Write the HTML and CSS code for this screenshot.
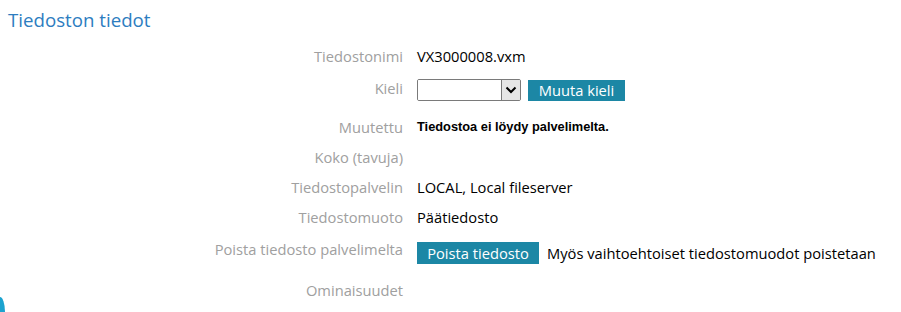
FILE: index.html
```html
<!DOCTYPE html>
<html lang="fi">
<head>
<meta charset="utf-8">
<title>Tiedoston tiedot</title>
<link rel="stylesheet" href="styles.css">
</head>
<body>
<h1 class="title">Tiedoston tiedot</h1>
<div class="details">
  <div class="row">
    <div class="label">Tiedostonimi</div>
    <div class="value">VX3000008.vxm</div>
  </div>
  <div class="row row-ctl">
    <div class="label">Kieli</div>
    <div class="value ctl">
      <div class="select"><span class="select-box"></span><span class="select-arrow"><svg width="12" height="8" viewBox="0 0 12 8"><path d="M1.5 1.5 L6 6 L10.5 1.5" fill="none" stroke="#000" stroke-width="2"/></svg></span></div>
      <button class="btn btn-lang">Muuta kieli</button>
    </div>
  </div>
  <div class="row">
    <div class="label">Muutettu</div>
    <div class="value strong">Tiedostoa ei löydy palvelimelta.</div>
  </div>
  <div class="row">
    <div class="label">Koko (tavuja)</div>
    <div class="value"></div>
  </div>
  <div class="row">
    <div class="label">Tiedostopalvelin</div>
    <div class="value">LOCAL, Local fileserver</div>
  </div>
  <div class="row">
    <div class="label">Tiedostomuoto</div>
    <div class="value">Päätiedosto</div>
  </div>
  <div class="row row-del">
    <div class="label">Poista tiedosto palvelimelta</div>
    <div class="value ctl">
      <button class="btn btn-del">Poista tiedosto</button>
      <span class="note">Myös vaihtoehtoiset tiedostomuodot poistetaan</span>
    </div>
  </div>
  <div class="row">
    <div class="label">Ominaisuudet</div>
    <div class="value"></div>
  </div>
</div>
<div class="fab"></div>
</body>
</html>
```
FILE: styles.css
```css
html, body {
  margin: 0;
  padding: 0;
  background: #fff;
  overflow: hidden;
}
body {
  padding: 8px;
  font-family: "Open Sans", "Noto Sans", sans-serif;
  font-size: 14.7px;
  color: #000;
  height: 296px;
  position: relative;
}
.title {
  margin: 0 0 9px 0;
  font-size: 18.7px;
  line-height: 24px;
  font-weight: normal;
  color: #2d7dbf;
}
.row {
  display: flex;
  gap: 14px;
  height: 30px;
  align-items: flex-start;
}
.label {
  width: 395px;
  flex: none;
  text-align: right;
  color: #a0a0a0;
  line-height: 20px;
  padding-top: 5px;
}
.value {
  line-height: 20px;
  padding-top: 5px;
}
.strong {
  font-family: "Liberation Sans", Arial, sans-serif;
  font-weight: bold;
  font-size: 12.8px;
}
.row-ctl {
  height: 41px;
}
.row-ctl .label {
  padding-top: 7px;
}
.row-ctl .value {
  padding-top: 8px;
}
.row-del {
  height: 43px;
}
.row-del .label {
  padding-top: 7px;
}
.row-del .value {
  padding-top: 10px;
}
.ctl {
  display: flex;
  align-items: center;
  gap: 7px;
}
.row-del .ctl {
  gap: 8px;
}
.select {
  display: flex;
  width: 104px;
  height: 22px;
  box-sizing: border-box;
  border: 1px solid #7a7a7a;
  border-radius: 2px;
  overflow: hidden;
}
.select-box {
  flex: 1;
  background: #fff;
}
.select-arrow {
  width: 18px;
  background: #e6e6e6;
  border-left: 1px solid #7a7a7a;
  display: flex;
  align-items: center;
  justify-content: center;
}
.btn {
  font-family: inherit;
  font-size: 14.7px;
  background: #1c87a5;
  color: #fff;
  border: none;
  border-radius: 0;
  height: 21px;
  padding: 0;
  line-height: 21px;
  margin: 0;
  text-align: center;
}
.btn-lang {
  width: 97px;
  margin-top: 1px;
}
.btn-del {
  width: 122px;
  height: 22px;
}
.fab {
  position: absolute;
  left: 0;
  bottom: 0;
  width: 5px;
  height: 15px;
  border-top-right-radius: 5px 15px;
  background: #1ca3cf;
}
```
